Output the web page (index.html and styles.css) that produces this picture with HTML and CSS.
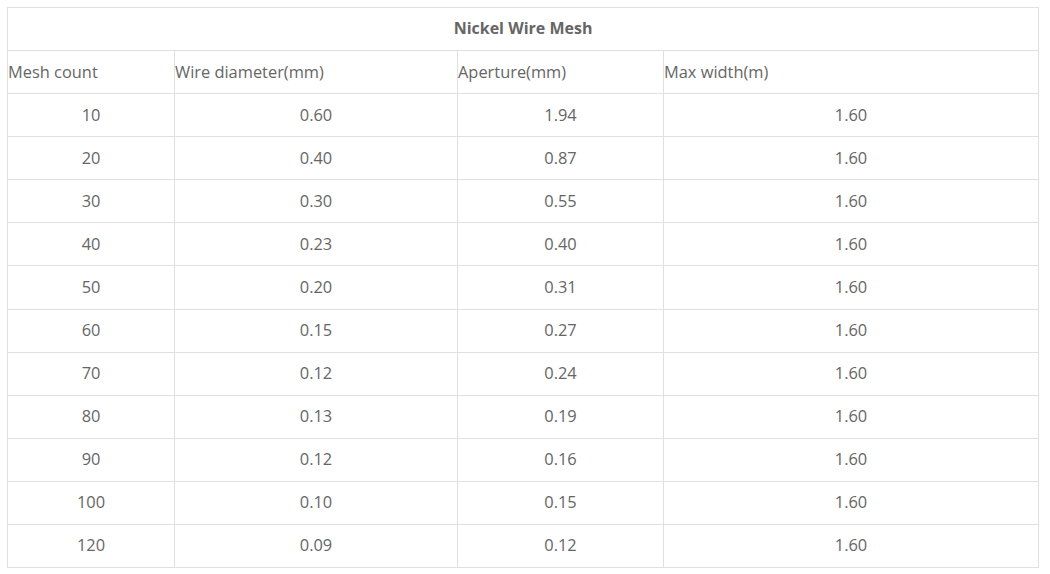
FILE: index.html
```html
<!DOCTYPE html>
<html>
<head>
<meta charset="utf-8">
<link rel="stylesheet" href="styles.css">
</head>
<body>
<table class="mesh">
  <colgroup>
    <col class="c1"><col class="c2"><col class="c3"><col class="c4">
  </colgroup>
  <tr><td class="title" colspan="4">Nickel Wire Mesh</td></tr>
  <tr class="head"><td>Mesh count</td><td>Wire diameter(mm)</td><td>Aperture(mm)</td><td>Max width(m)</td></tr>
  <tr><td>10</td><td>0.60</td><td>1.94</td><td>1.60</td></tr>
  <tr><td>20</td><td>0.40</td><td>0.87</td><td>1.60</td></tr>
  <tr><td>30</td><td>0.30</td><td>0.55</td><td>1.60</td></tr>
  <tr><td>40</td><td>0.23</td><td>0.40</td><td>1.60</td></tr>
  <tr><td>50</td><td>0.20</td><td>0.31</td><td>1.60</td></tr>
  <tr><td>60</td><td>0.15</td><td>0.27</td><td>1.60</td></tr>
  <tr><td>70</td><td>0.12</td><td>0.24</td><td>1.60</td></tr>
  <tr><td>80</td><td>0.13</td><td>0.19</td><td>1.60</td></tr>
  <tr><td>90</td><td>0.12</td><td>0.16</td><td>1.60</td></tr>
  <tr><td>100</td><td>0.10</td><td>0.15</td><td>1.60</td></tr>
  <tr><td>120</td><td>0.09</td><td>0.12</td><td>1.60</td></tr>
</table>
</body>
</html>
```
FILE: styles.css
```css
html, body {
  margin: 0;
  padding: 0;
  background: #fff;
}
body {
  padding: 7px 0 0 7px;
  font-family: "Open Sans", "Noto Sans", sans-serif;
  font-size: 16.4px;
  color: #666;
}
.mesh {
  border-collapse: collapse;
  table-layout: fixed;
  width: 1031px;
}
.c1 { width: 167px; }
.c2 { width: 283px; }
.c3 { width: 206px; }
.c4 { width: 375px; }
.mesh td {
  border: 1px solid #e0e0e0;
  height: 43.08px;
  padding: 0 0 2px 0;
  text-align: center;
  vertical-align: middle;
  box-sizing: border-box;
}
.mesh .title {
  font-weight: bold;
  font-size: 16px;
}
.mesh .head td {
  text-align: left;
}
```
